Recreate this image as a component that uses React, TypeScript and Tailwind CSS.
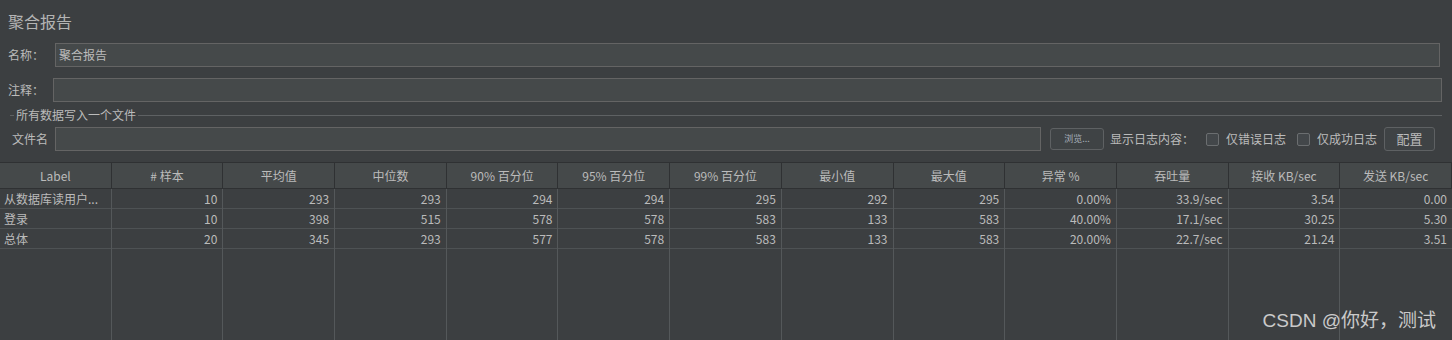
import React from "react";

const headers = [
  "Label",
  "# 样本",
  "平均值",
  "中位数",
  "90% 百分位",
  "95% 百分位",
  "99% 百分位",
  "最小值",
  "最大值",
  "异常 %",
  "吞吐量",
  "接收 KB/sec",
  "发送 KB/sec",
];

const rows: string[][] = [
  ["从数据库读用户...", "10", "293", "293", "294", "294", "295", "292", "295", "0.00%", "33.9/sec", "3.54", "0.00"],
  ["登录", "10", "398", "515", "578", "578", "583", "133", "583", "40.00%", "17.1/sec", "30.25", "5.30"],
  ["总体", "20", "345", "293", "577", "578", "583", "133", "583", "20.00%", "22.7/sec", "21.24", "3.51"],
];

function Checkbox() {
  return <div className="w-[13px] h-[13px] border border-[#6b6e70] bg-[#43474a] rounded-[2px] shrink-0" />;
}

export default function App() {
  return (
    <div
      className="relative w-[1452px] h-[340px] overflow-hidden bg-[#3c3f41] text-[#bbbbbb] flex flex-col"
      style={{ fontFamily: '"Noto Sans CJK SC", "Noto Sans", sans-serif' }}
    >
      <div className="h-[43px] pl-2 pt-[10px] text-[16px] leading-[22px] text-[#b4b4b4]">聚合报告</div>

      <div className="flex items-center h-6 pl-2 pr-3">
        <div className="w-[47px] text-xs">名称：</div>
        <div className="flex-1 h-6 border border-[#646464] bg-[#45494a] flex items-center pl-[3px] text-xs">聚合报告</div>
      </div>

      <div className="flex items-center h-6 pl-2 pr-[10px] mt-[11px]">
        <div className="w-[45px] text-xs">注释：</div>
        <div className="flex-1 h-6 border border-[#646464] bg-[#45494a]" />
      </div>

      <div className="flex items-center h-[14px] mt-[6px] pl-[10px] pr-[10px]">
        <div className="w-[4px] h-px bg-[#5e6163]" />
        <div className="px-[2px] text-xs leading-[14px]">所有数据写入一个文件</div>
        <div className="flex-1 h-px bg-[#5e6163]" />
      </div>

      <div className="flex items-center h-6 mt-[5px]">
        <div className="w-[55px] pl-3 text-xs">文件名</div>
        <div className="w-[986px] h-6 border border-[#646464] bg-[#45494a]" />
        <div className="ml-[9px] w-[54px] h-[22px] border border-[#5e6163] rounded-[3px] bg-[#3f4345] flex items-center justify-center text-[9px] text-[#a7b0bb]">
          浏览...
        </div>
        <div className="ml-[6px] text-xs whitespace-nowrap">显示日志内容：</div>
        <div className="ml-[12px]"><Checkbox /></div>
        <div className="ml-[7px] text-xs whitespace-nowrap">仅错误日志</div>
        <div className="ml-[11px]"><Checkbox /></div>
        <div className="ml-[7px] text-xs whitespace-nowrap">仅成功日志</div>
        <div className="ml-[7px] w-[51px] h-6 border border-[#5e6163] rounded-[3px] bg-[#3f4345] flex items-center justify-center text-[13px]">
          配置
        </div>
      </div>

      <div className="mt-[11px] flex-1 grid grid-cols-[repeat(13,minmax(0,1fr))] border-t border-[#2f3133]">
        {headers.map((h, ci) => (
          <div key={ci} className="flex flex-col min-w-0">
            <div className="h-[26px] bg-[#45494a] border-r border-b border-[#2f3133] flex items-center justify-center text-xs whitespace-nowrap">
              {h}
            </div>
            <div className={`flex-1 flex flex-col ${ci < 12 ? "border-r border-[#54585a]" : ""}`}>
              {rows.map((r, ri) => (
                <div
                  key={ri}
                  className={`h-5 border-b border-[#4e5254] flex items-center text-xs whitespace-nowrap overflow-hidden ${
                    ci === 0 ? "justify-start pl-1" : "justify-end pr-[5px]"
                  }`}
                >
                  {r[ci]}
                </div>
              ))}
            </div>
          </div>
        ))}
      </div>

      <div
        className="absolute right-[16px] bottom-[7px] text-[19px] leading-[24px] text-[#cacaca]"
        style={{ fontFamily: '"Liberation Sans", "Noto Sans CJK SC", sans-serif' }}
      >
        CSDN @你好，测试
      </div>
    </div>
  );
}
